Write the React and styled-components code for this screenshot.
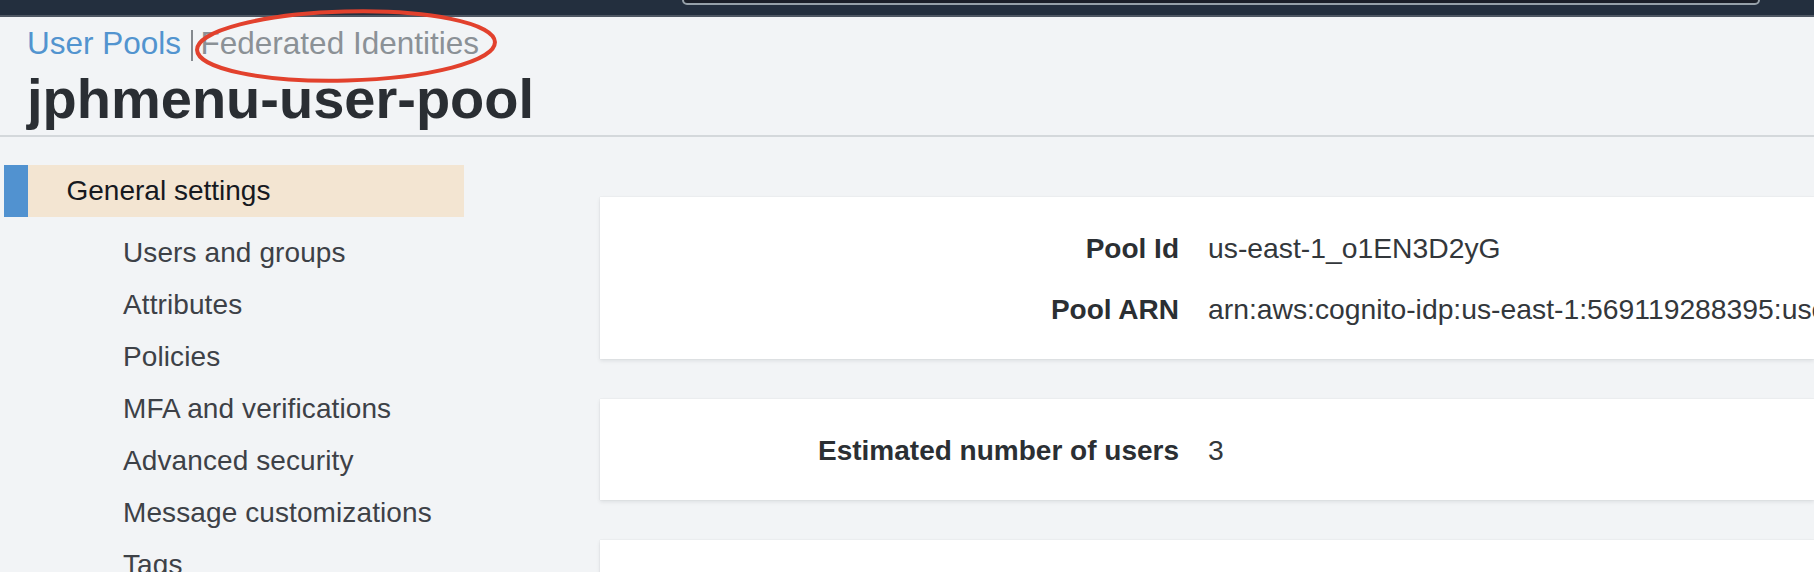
import React from "react";
import styled, { createGlobalStyle } from "styled-components";

const GlobalStyle = createGlobalStyle`
  *, *::before, *::after { box-sizing: border-box; }
  html, body {
    margin: 0;
    padding: 0;
    overflow: hidden;
    background: #f2f4f6;
    font-family: "Liberation Sans", Arial, Helvetica, sans-serif;
  }
`;

const Page = styled.div`
  width: 100%;
  min-height: 100vh;
  background: #f2f4f6;
`;

const TopBar = styled.div`
  height: 17px;
  background: #232f3e;
  border-bottom: 2px solid #4e5763;
  display: flex;
  align-items: flex-end;
  padding: 0 0 10px 682px;
`;

const SearchBox = styled.div`
  flex: 0 0 1078px;
  height: 30px;
  background: #1b2029;
  border: 2px solid #96a1a9;
  border-radius: 5px;
`;

const Header = styled.header`
  position: relative;
  padding: 7.6px 0 4px 27px;
  border-bottom: 2px solid #d4d8db;
`;

const Breadcrumb = styled.nav`
  display: flex;
  align-items: center;
  font-size: 31.5px;
  line-height: 37px;
`;

const CrumbLink = styled.a`
  color: #5294cf;
  text-decoration: none;
`;

const CrumbSep = styled.span`
  width: 1.5px;
  height: 31px;
  margin: 5px 8px 0 10px;
  background: #85898e;
`;

const CrumbMuted = styled.span`
  color: #8b9196;
`;

const Title = styled.h1`
  margin: 5px 0 0;
  font-size: 56px;
  line-height: 64px;
  font-weight: 700;
  color: #2a2e33;
`;

const Annotation = styled.svg`
  position: absolute;
  left: 180px;
  top: -10px;
  width: 340px;
  height: 90px;
  overflow: visible;
  pointer-events: none;
  z-index: 2;
`;

const Body = styled.div`
  display: flex;
  align-items: flex-start;
`;

const Sidebar = styled.nav`
  flex: 0 0 468px;
  padding: 28.4px 4px 0 4px;
  display: flex;
  flex-direction: column;
`;

const NavItem = styled.div`
  height: 52px;
  line-height: 52px;
  font-size: 28px;
  white-space: nowrap;
  color: ${(p) => (p.$active ? "#16191f" : "#3d4147")};
  background: ${(p) => (p.$active ? "#f3e5d2" : "transparent")};
  border-left: ${(p) => (p.$active ? "24px solid #5192d0" : "none")};
  padding-left: ${(p) => (p.$active ? "38.5px" : "119px")};
  margin-bottom: ${(p) => (p.$active ? "10px" : "0")};
  letter-spacing: ${(p) => (p.$active ? "0" : "0.1px")};
`;

const Main = styled.main`
  flex: 1;
  min-width: 0;
  padding: 60px 0 0 132px;
  display: flex;
  flex-direction: column;
  gap: 40px;
`;

const Card = styled.section`
  background: #ffffff;
  box-shadow: 0 2px 4px rgba(0, 20, 30, 0.09), 0 0 1px rgba(0, 20, 30, 0.12);
  padding: 31px 0 29px;
  min-height: ${(p) => p.$minHeight || "0"};
  display: grid;
  grid-template-columns: 579px 1fr;
  column-gap: 29px;
  row-gap: 20px;
  align-items: baseline;
`;

const Label = styled.div`
  text-align: right;
  font-size: 28px;
  line-height: 40px;
  font-weight: 700;
  color: #2b2f33;
  white-space: nowrap;
`;

const Value = styled.div`
  font-size: 28.3px;
  line-height: 40px;
  color: #33373b;
  white-space: nowrap;
  overflow: hidden;
`;

const navItems = [
  "Users and groups",
  "Attributes",
  "Policies",
  "MFA and verifications",
  "Advanced security",
  "Message customizations",
  "Tags",
  "App clients",
];

export default function App() {
  return (
    <Page>
      <GlobalStyle />
      <TopBar>
        <SearchBox />
      </TopBar>
      <Header>
        <Breadcrumb>
          <CrumbLink href="#">User Pools</CrumbLink>
          <CrumbSep />
          <CrumbMuted>Federated Identities</CrumbMuted>
        </Breadcrumb>
        <Title>jphmenu-user-pool</Title>
        <Annotation width="340" height="90" viewBox="0 0 340 90">
          <ellipse
            cx="166"
            cy="39"
            rx="149"
            ry="34.5"
            fill="none"
            stroke="#e2412d"
            strokeWidth="4"
            transform="rotate(-1.5 166 39)"
          />
        </Annotation>
      </Header>
      <Body>
        <Sidebar>
          <NavItem $active>General settings</NavItem>
          {navItems.map((item) => (
            <NavItem key={item}>{item}</NavItem>
          ))}
        </Sidebar>
        <Main>
          <Card>
            <Label>Pool Id</Label>
            <Value>us-east-1_o1EN3D2yG</Value>
            <Label>Pool ARN</Label>
            <Value>arn:aws:cognito-idp:us-east-1:569119288395:userpool/us-east-1_o1EN3D2yG</Value>
          </Card>
          <Card>
            <Label>Estimated number of users</Label>
            <Value>3</Value>
          </Card>
          <Card $minHeight="200px" />
        </Main>
      </Body>
    </Page>
  );
}
